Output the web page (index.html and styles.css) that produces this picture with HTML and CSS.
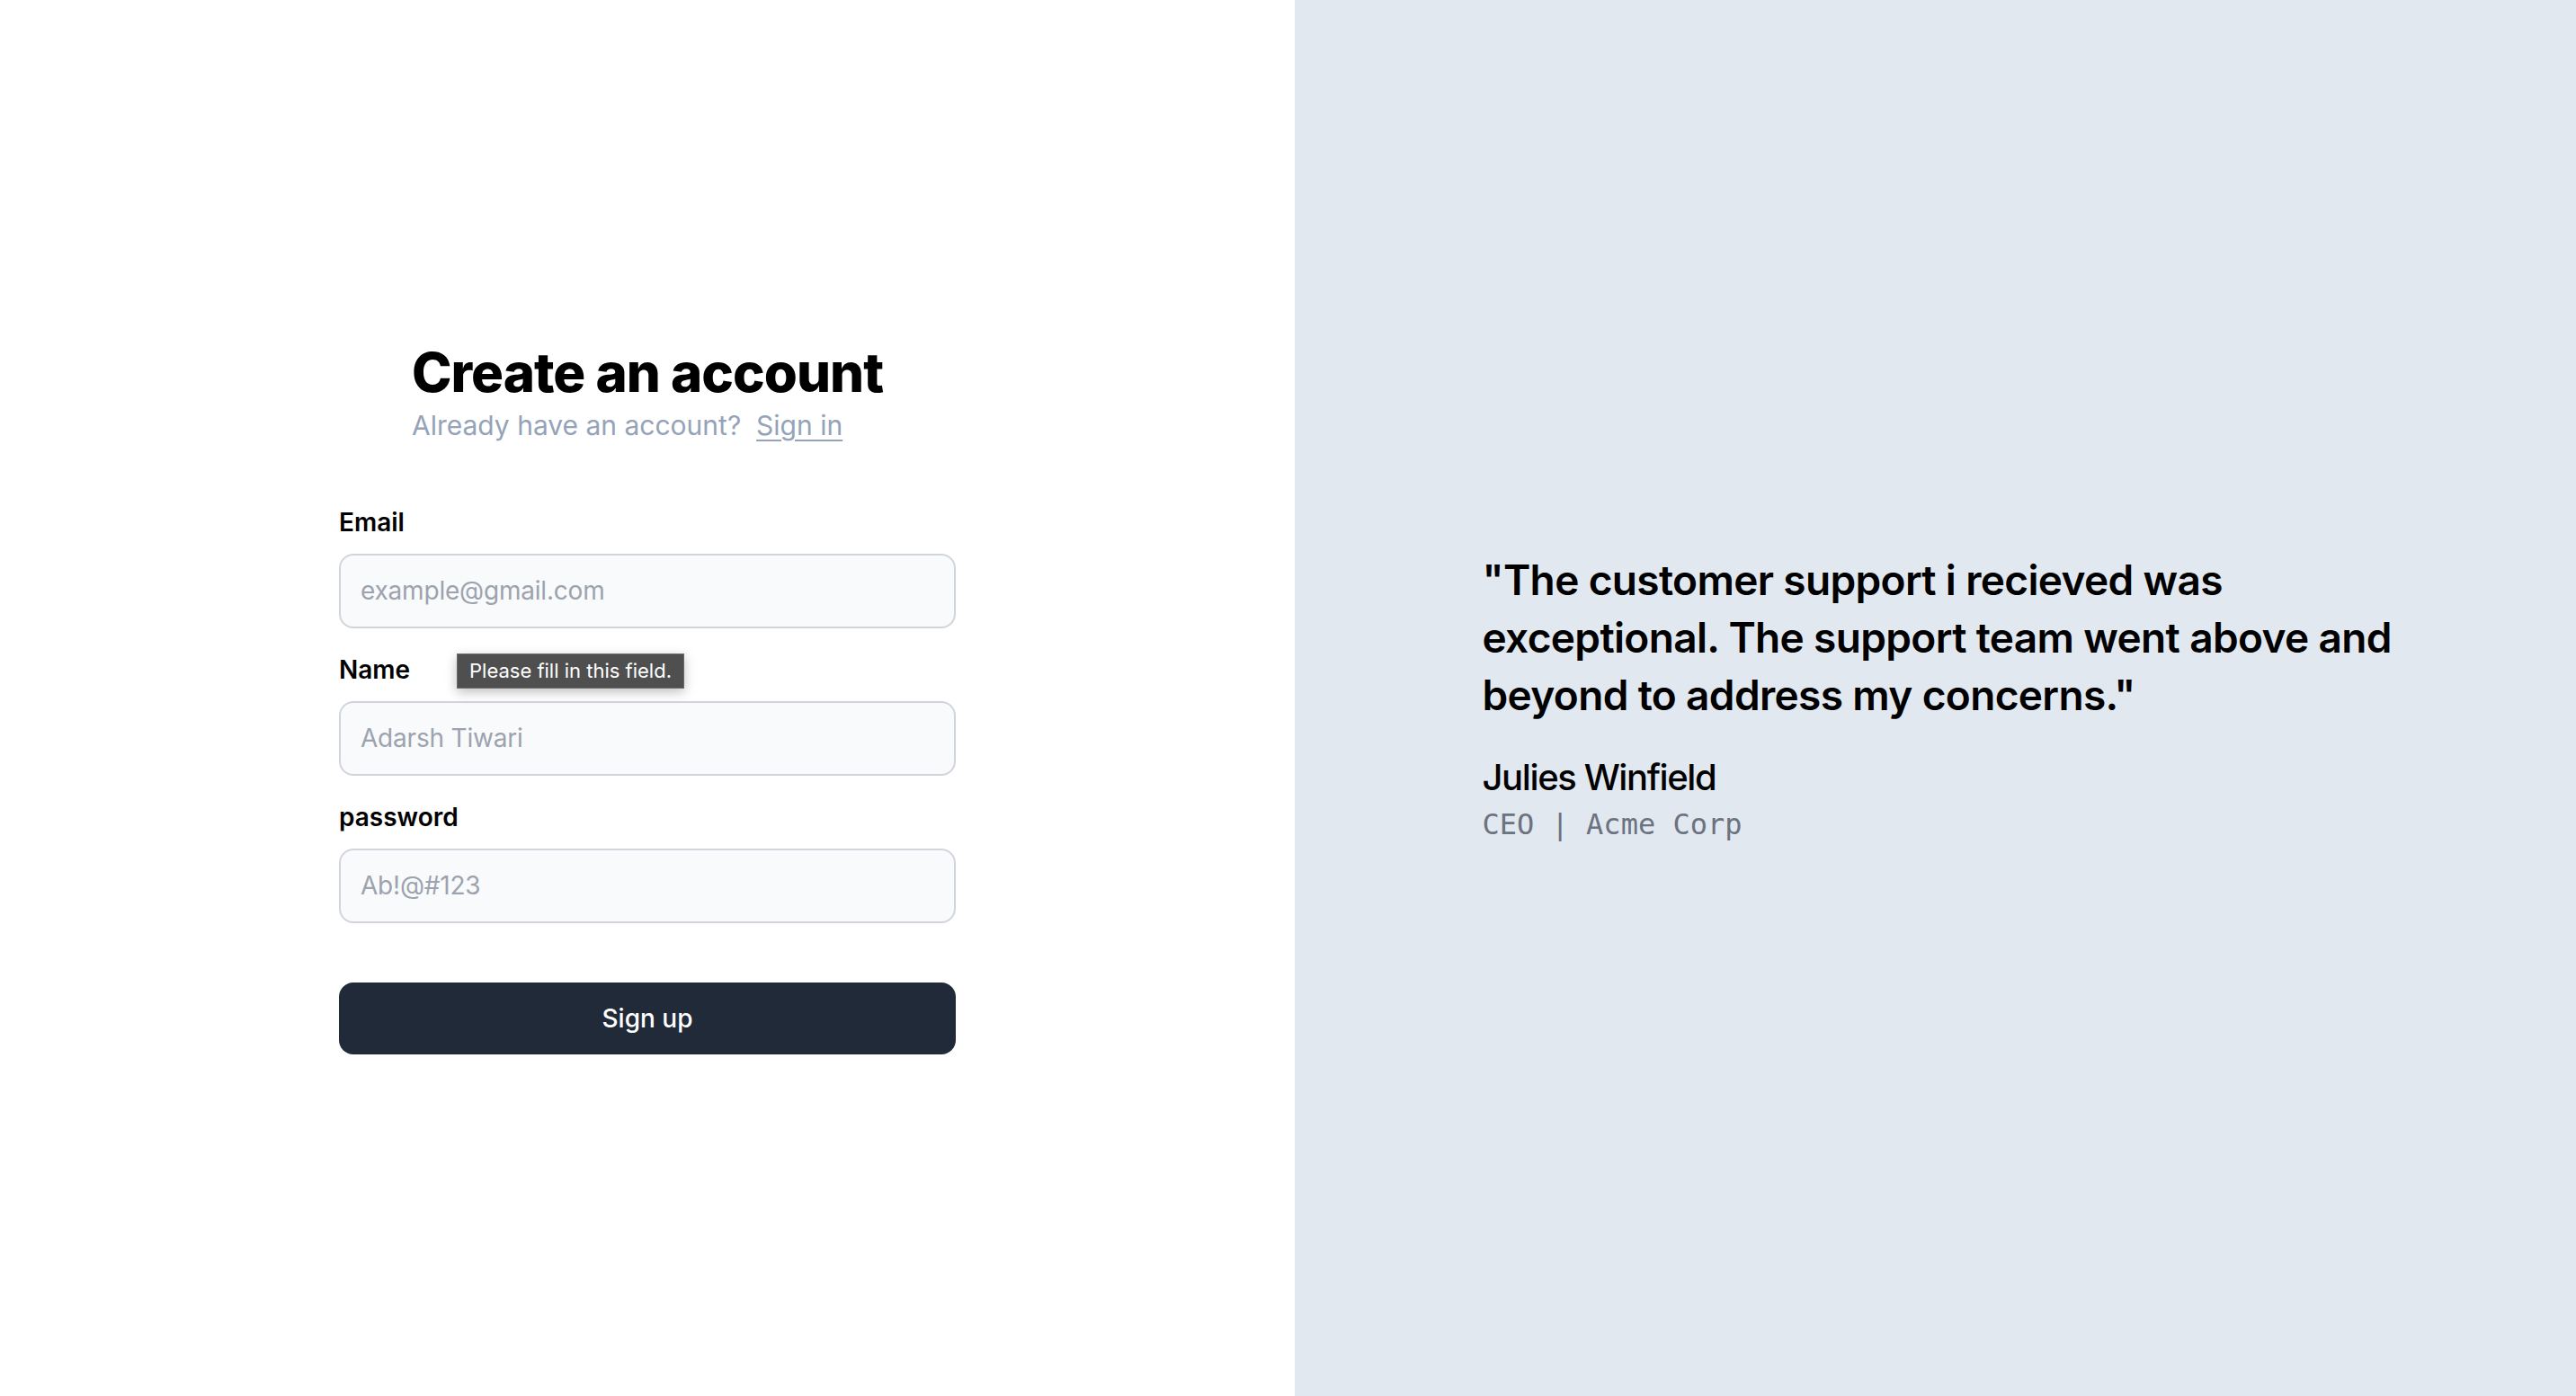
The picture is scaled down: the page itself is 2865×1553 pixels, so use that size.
FILE: index.html
```html
<!DOCTYPE html>
<html lang="en">
<head>
    <meta charset="UTF-8">
    <meta name="viewport" content="width=device-width, initial-scale=1.0">
    <title>Create an account</title>
    <link rel="stylesheet" href="styles.css">
</head>
<body>
    <div class="page">
        <!-- Sign up form -->
        <div class="left">
            <div class="intro">
                <h1>Create an account</h1>
                <p class="subtitle">Already have an account?&nbsp; <a href="#">Sign in</a></p>
            </div>

            <form class="form" onsubmit="return false;">
                <div class="field">
                    <label for="email">Email</label>
                    <input type="email" id="email" placeholder="example@gmail.com">
                </div>
                <div class="field">
                    <label for="name">Name</label>
                    <input type="text" id="name" placeholder="Adarsh Tiwari">
                    <div class="tooltip">Please fill in this field.</div>
                </div>
                <div class="field">
                    <label for="password">password</label>
                    <input type="password" id="password" placeholder="Ab!@#123">
                </div>
                <button type="submit">Sign up</button>
            </form>
        </div>

        <!-- Testimonial -->
        <div class="right">
            <div class="testimonial">
                <blockquote>"The customer support i recieved was exceptional. The support team went above and beyond to address my concerns."</blockquote>
                <div class="author">Julies Winfield</div>
                <div class="role">CEO | Acme Corp</div>
            </div>
        </div>
    </div>
</body>
</html>
```

FILE: styles.css
```css
/* General Styles */
body {
    margin: 0;
    padding: 0;
    font-family: Inter, "Noto Sans", sans-serif;
    color: #000;
    background-color: #fff;
}

.page {
    display: flex;
    height: 100vh;
}

/* Left column */
.left {
    width: 1440px;
    display: flex;
    flex-direction: column;
    align-items: center;
    justify-content: center;
}

.intro {
    width: fit-content;
}

h1 {
    margin: 0 0 6px;
    font-size: 60px;
    line-height: 66px;
    font-weight: 800;
    letter-spacing: -1px;
}

.subtitle {
    margin: 2px 0 0;
    font-size: 30px;
    line-height: 40px;
    color: #94a3b8;
}

.subtitle a {
    color: #94a3b8;
    text-decoration: underline;
    text-underline-offset: 5px;
    text-decoration-thickness: 2px;
}

/* Form */
.form {
    width: 686px;
    margin-top: 68px;
    display: flex;
    flex-direction: column;
    gap: 26px;
}

.field {
    position: relative;
    display: flex;
    flex-direction: column;
    gap: 15px;
}

label {
    font-size: 28px;
    line-height: 40px;
    font-weight: 600;
}

input {
    box-sizing: border-box;
    height: 83px;
    padding: 0 22px;
    border: 2px solid #d1d5db;
    border-radius: 16px;
    background-color: #f9fafb;
    font-family: inherit;
    font-size: 28px;
    letter-spacing: -0.2px;
    color: #111827;
    outline: none;
}

input::placeholder {
    color: #9ca3af;
}

button {
    margin-top: 40px;
    height: 80px;
    border: none;
    border-radius: 16px;
    background-color: #212a39;
    color: #fff;
    font-family: inherit;
    font-size: 28px;
    font-weight: 500;
    cursor: pointer;
}

/* Browser validation bubble */
.tooltip {
    position: absolute;
    left: 131px;
    top: 2px;
    box-sizing: border-box;
    height: 39px;
    padding: 0 13px;
    display: flex;
    align-items: center;
    background-color: #4f4f4f;
    border: 1px solid #6a6a6a;
    color: #fff;
    font-size: 22px;
    box-shadow: 0 4px 12px rgba(0, 0, 0, 0.25);
}

/* Right column */
.right {
    flex: 1;
    padding-left: 16px;
    background-color: #e2e8f0;
    display: flex;
    align-items: center;
    justify-content: center;
}

.testimonial {
    max-width: 1024px;
}

blockquote {
    margin: 0;
    font-size: 46px;
    line-height: 64px;
    font-weight: 600;
    letter-spacing: -0.65px;
}

.author {
    margin-top: 32px;
    font-size: 40px;
    line-height: 56px;
    font-weight: 500;
    letter-spacing: -1.4px;
}

.role {
    font-family: "DejaVu Sans Mono", monospace;
    font-size: 32px;
    line-height: 48px;
    color: #6b7280;
}
```
